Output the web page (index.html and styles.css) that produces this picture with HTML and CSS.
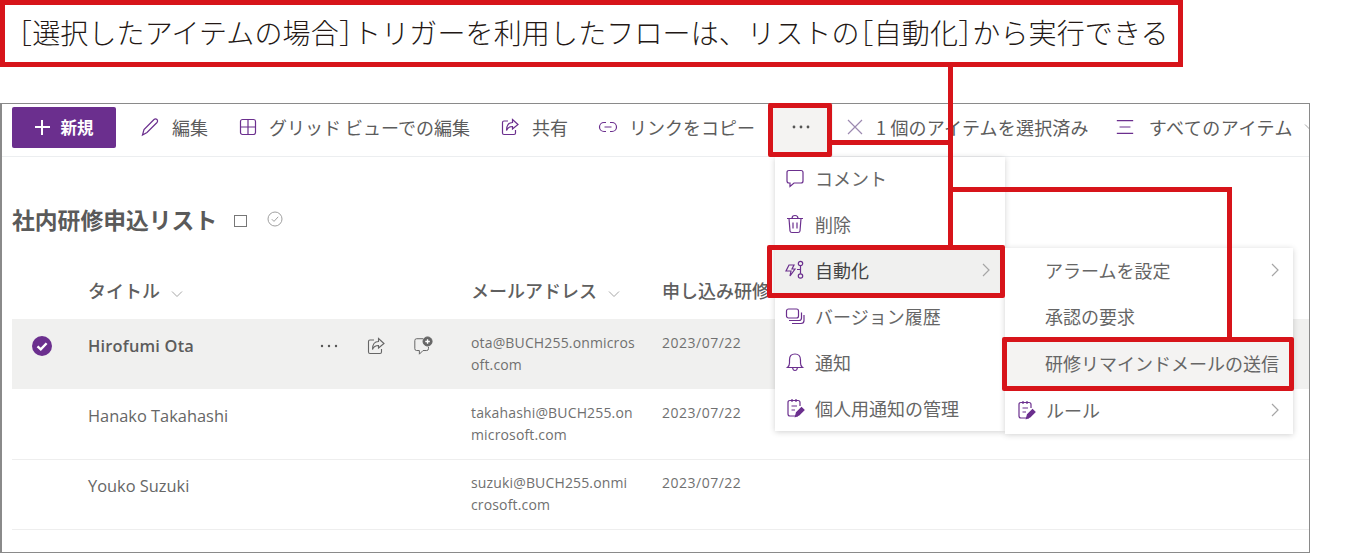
FILE: index.html
```html
<!DOCTYPE html>
<html lang="ja">
<head>
    <meta charset="UTF-8">
    <meta name="viewport" content="width=device-width, initial-scale=1.0">
    <title>社内研修申込リスト</title>
    <link rel="stylesheet" href="styles.css">
</head>
<body>
    <div class="page">
        <div class="caption"><span class="half">［</span>選択したアイテムの場合<span class="half">］</span>トリガーを利用したフローは、リストの<span class="half">［</span>自動化<span class="half">］</span>から実行できる</div>

        <section class="frame">
            <!-- ツールバー -->
            <div class="toolbar">
                <button class="btn-new"><span class="plus"></span>新規</button>
                <span class="tool tool-edit">
                    <svg class="ico" viewBox="0 0 20 20"><path d="M2.5 18 L4 12.5 L14 2.5 Q15.5 1.2 17 2.5 Q18.3 4 17 5.5 L7 15.5 Z"/></svg>編集
                </span>
                <span class="tool tool-grid">
                    <svg class="ico" viewBox="0 0 20 20"><rect x="2.5" y="2.5" width="15" height="15" rx="2"/><path d="M2.5 10 H17.5 M10 2.5 V17.5"/></svg>グリッド ビューでの編集
                </span>
                <span class="tool tool-share">
                    <svg class="ico" viewBox="0 0 20 20"><path d="M8 4 H4 Q2.5 4 2.5 5.5 V16 Q2.5 17.5 4 17.5 H14 Q15.5 17.5 15.5 16 V13"/><path d="M12.5 2.5 L18 7.5 L12.5 12 V9.5 Q8 9.5 6.5 13.5 Q6.5 5.5 12.5 5.5 Z"/></svg>共有
                </span>
                <span class="tool tool-link">
                    <svg class="ico" viewBox="0 0 20 20"><path d="M8 5.5 H6 A4.5 4.5 0 0 0 6 14.5 H8 M12 5.5 H14 A4.5 4.5 0 0 1 14 14.5 H12 M6.5 10 H13.5"/></svg>リンクをコピー
                </span>
                <span class="tool-more">
                    <svg class="dots" viewBox="0 0 20 4"><circle cx="3" cy="2" r="1.4"/><circle cx="10" cy="2" r="1.4"/><circle cx="17" cy="2" r="1.4"/></svg>
                </span>
                <span class="tool tool-clear">
                    <svg class="ico ico-light" viewBox="0 0 20 20"><path d="M3 3 L17 17 M17 3 L3 17"/></svg>1 個のアイテムを選択済み
                </span>
                <span class="tool tool-view">
                    <svg class="ico" viewBox="0 0 22 20"><path d="M2 3 H20 M5 10 H17 M2 17 H20"/></svg>すべてのアイテム
                    <svg class="chev-down chev-view" viewBox="0 0 12 8"><path d="M1 1.5 L6 6.5 L11 1.5"/></svg>
                </span>
            </div>

            <!-- リスト -->
            <h1 class="list-title">社内研修申込リスト<span class="square"></span>
                <svg class="title-check" viewBox="0 0 16 16"><circle cx="8" cy="8" r="7"/><path d="M4.8 8.2 L7 10.4 L11.2 5.8"/></svg>
            </h1>

            <div class="list-head">
                <span></span>
                <span>タイトル<svg class="chev-down" viewBox="0 0 12 8"><path d="M1 1.5 L6 6.5 L11 1.5"/></svg></span>
                <span>メールアドレス<svg class="chev-down" viewBox="0 0 12 8"><path d="M1 1.5 L6 6.5 L11 1.5"/></svg></span>
                <span>申し込み研修</span>
            </div>

            <div class="row row-selected">
                <span class="cell-check">
                    <svg viewBox="0 0 20 20"><circle class="fill" cx="10" cy="10" r="10"/><path class="tick" d="M5.5 10.3 L8.8 13.4 L14.6 7.2"/></svg>
                </span>
                <div class="cell-title">
                    Hirofumi Ota
                    <div class="row-actions">
                        <svg class="dots" viewBox="0 0 20 4"><circle cx="3" cy="2" r="1.2"/><circle cx="10" cy="2" r="1.2"/><circle cx="17" cy="2" r="1.2"/></svg>
                        <svg class="act" viewBox="0 0 20 20"><path d="M8 4 H4 Q2.5 4 2.5 5.5 V16 Q2.5 17.5 4 17.5 H14 Q15.5 17.5 15.5 16 V13"/><path d="M12.5 2.5 L18 7.5 L12.5 12 V9.5 Q8 9.5 6.5 13.5 Q6.5 5.5 12.5 5.5 Z"/></svg>
                        <svg class="act" viewBox="0 0 22 22"><path d="M11 3 H4 Q2 3 2 5 V14 Q2 16 4 16 H7 V20 L11 16 H15 Q17 16 17 14 V12"/><circle class="badge" cx="16" cy="6" r="5"/><path class="badge-plus" d="M16 3.5 V8.5 M13.5 6 H18.5"/></svg>
                    </div>
                </div>
                <div class="cell-mail">ota@BUCH255.onmicros<br>oft.com</div>
                <div class="cell-date">2023/07/22</div>
            </div>
            <div class="row">
                <span class="cell-check"></span>
                <div class="cell-title">Hanako Takahashi</div>
                <div class="cell-mail">takahashi@BUCH255.on<br>microsoft.com</div>
                <div class="cell-date">2023/07/22</div>
            </div>
            <div class="row">
                <span class="cell-check"></span>
                <div class="cell-title">Youko Suzuki</div>
                <div class="cell-mail">suzuki@BUCH255.onmi<br>crosoft.com</div>
                <div class="cell-date">2023/07/22</div>
            </div>
        </section>

        <!-- コンテキストメニュー -->
        <ul class="menu menu-main">
            <li class="menu-item">
                <svg class="ico" viewBox="0 0 20 20"><path d="M4 2.5 H16 Q18 2.5 18 4.5 V13 Q18 15 16 15 H9 L5 18.5 V15 H4 Q2 15 2 13 V4.5 Q2 2.5 4 2.5 Z"/></svg>コメント
            </li>
            <li class="menu-item">
                <svg class="ico" viewBox="0 0 20 20"><path d="M2 4.5 H18 M7 4.5 Q7 1.5 10 1.5 Q13 1.5 13 4.5 M4 4.5 L5 17 Q5.2 18.5 7 18.5 H13 Q14.8 18.5 15 17 L16 4.5 M8 8.5 V14.5 M12 8.5 V14.5"/></svg>削除
            </li>
            <li class="menu-item menu-item-on">
                <svg class="ico" viewBox="0 0 20 20"><path d="M5 6 H10 L8 10 H11 L6 17 L7 12 H2 Z" transform="translate(-1 -1)"/><circle cx="15.5" cy="3.5" r="2.2"/><circle cx="15.5" cy="16" r="2.2"/><path d="M15.5 5.7 V13.8 M15.5 9.5 H12"/></svg>自動化
                <svg class="chev-right" viewBox="0 0 8 14"><path d="M1 1 L7 7 L1 13"/></svg>
            </li>
            <li class="menu-item">
                <svg class="ico" viewBox="0 0 20 20"><rect x="1.5" y="3" width="12" height="9" rx="2"/><path d="M4 14.5 H14 Q16.5 14.5 16.5 12 V6.5 M7 17.5 H16 Q19 17.5 19 14.5 V9"/></svg>バージョン履歴
            </li>
            <li class="menu-item">
                <svg class="ico" viewBox="0 0 20 20"><path d="M2.5 15.5 Q4.5 14 4.5 11 V8 Q4.5 2 10 2 Q15.5 2 15.5 8 V11 Q15.5 14 17.5 15.5 Z M7.5 15.5 Q8 18.5 10 18.5 Q12 18.5 12.5 15.5"/></svg>通知
            </li>
            <li class="menu-item">
                <svg class="ico" viewBox="0 0 20 20"><use href="#rule-icon"/></svg>個人用通知の管理
            </li>
        </ul>

        <ul class="menu menu-sub">
            <li class="menu-item">アラームを設定
                <svg class="chev-right" viewBox="0 0 8 14"><path d="M1 1 L7 7 L1 13"/></svg>
            </li>
            <li class="menu-item menu-item-approve">承認の要求</li>
            <li class="menu-item menu-item-send">研修リマインドメールの送信</li>
            <li class="menu-item menu-item-rule">
                <svg class="ico" viewBox="0 0 20 20">
                    <g id="rule-icon">
                        <path d="M13 18 H5 Q3 18 3 16 V4.5 Q3 2.5 5 2.5 H13 Q15 2.5 15 4.5 V8 M7 1 V4 M11 1 V4 M6.5 8 H12 M6.5 12 H10"/>
                        <path class="solid" d="M10.5 18.5 L11.5 14.5 L16.5 9.5 L19 12 L14 17 Z"/>
                    </g>
                </svg>ルール
                <svg class="chev-right" viewBox="0 0 8 14"><path d="M1 1 L7 7 L1 13"/></svg>
            </li>
        </ul>

        <!-- 赤い注釈 -->
        <div class="mark mark-more"></div>
        <div class="mark mark-auto"></div>
        <div class="mark mark-send"></div>
        <div class="line line-down"></div>
        <div class="line line-more"></div>
        <div class="line line-over"></div>
        <div class="line line-right"></div>
    </div>
</body>
</html>
```

FILE: styles.css
```css
/* ページ全体 */
html, body {
    margin: 0;
    padding: 0;
    background-color: white;
}

body {
    font-family: "Noto Sans CJK JP", "Noto Sans", sans-serif;
    color: #5c5c5c;
}

.page {
    position: relative;
    width: 1349px;
    height: 553px;
    overflow: hidden;
}

/* 上部の説明文 */
.caption {
    box-sizing: border-box;
    width: 1183px;
    height: 67px;
    border: 5px solid #d7141a;
    padding-left: 13px;
    font-size: 28px;
    font-weight: 300;
    letter-spacing: 0.14px;
    line-height: 54px;
    color: #231815;
    white-space: nowrap;
}

.half {
    font-feature-settings: "halt";
}

/* スクリーンショットの枠 */
.frame {
    box-sizing: border-box;
    width: 1310px;
    height: 450px;
    margin: 36px 0 0 0;
    border: 1px solid #8a8a8a;
    border-left-width: 2px;
    overflow: hidden;
}

/* ツールバー */
.toolbar {
    display: flex;
    align-items: center;
    box-sizing: content-box;
    height: 46px;
    padding: 0 0 6px 10px;
    border-bottom: 1px solid #eceef0;
    white-space: nowrap;
    font-size: 18px;
}

.toolbar > * {
    flex: none;
}

.btn-new {
    display: flex;
    align-items: center;
    justify-content: center;
    gap: 11px;
    width: 104px;
    height: 41px;
    padding: 0;
    border: none;
    border-radius: 2px;
    background-color: #6b2f8e;
    color: white;
    font-family: inherit;
    font-size: 16.5px;
    font-weight: 700;
}

.plus {
    position: relative;
    width: 15px;
    height: 15px;
    background:
        linear-gradient(white, white) center / 100% 2px no-repeat,
        linear-gradient(white, white) center / 2px 100% no-repeat;
}

.tool {
    display: flex;
    align-items: center;
    gap: 10px;
}

.tool-edit { margin-left: 24px; gap: 12px; }
.tool-grid { margin-left: 30px; gap: 11px; }
.tool-share { margin-left: 30px; gap: 12px; }
.tool-link { margin-left: 30px; gap: 11px; }
.tool-clear { margin-left: 5px; gap: 11px; letter-spacing: 0.2px; }
.tool-view { margin-left: 26px; gap: 14px; letter-spacing: 0.5px; }

.tool-more {
    display: flex;
    align-items: center;
    justify-content: center;
    align-self: flex-start;
    box-sizing: border-box;
    width: 64px;
    height: 52px;
    padding-bottom: 6px;
    margin: 0 7px 0 14px;
    background-color: #f4f3f2;
}

/* アイコン共通 */
svg {
    fill: none;
    stroke: #6b2f8e;
    stroke-width: 1.2;
    flex: none;
}

.ico {
    width: 20px;
    height: 20px;
}

.ico-light {
    stroke: #9c8ab0;
}

.dots {
    width: 20px;
    height: 4px;
    fill: #555;
    stroke: none;
}

.chev-down {
    width: 12px;
    height: 8px;
    stroke: #a6a6a6;
    stroke-width: 1;
}

.chev-view {
    margin-left: -3px;
}

.chev-right {
    width: 8px;
    height: 14px;
    margin-left: auto;
    stroke: #a6a6a6;
    stroke-width: 1.2;
}

.solid {
    fill: #6b2f8e;
}

/* リスト見出し */
.list-title {
    display: flex;
    align-items: center;
    height: 32px;
    margin: 46px 0 0 10px;
    font-size: 22.8px;
    font-weight: 700;
    color: #5a5a5a;
}

.square {
    box-sizing: border-box;
    width: 13px;
    height: 12px;
    margin: 4px 20px 0 17px;
    border: 1px solid #777;
}

.title-check {
    width: 16px;
    height: 16px;
    stroke: #a0a0a0;
    stroke-width: 1;
}

.list-head,
.row {
    display: grid;
    grid-template-columns: 76px 383px 191px 1fr;
    margin-left: 10px;
}

.list-head {
    height: 28px;
    margin-top: 41px;
    margin-bottom: 15px;
    font-size: 18px;
    font-weight: 500;
    line-height: 28px;
    color: #5f5f5f;
}

.list-head .chev-down {
    margin-left: 11px;
}

/* 行 */
.row {
    box-sizing: border-box;
    height: 70px;
    border-bottom: 1px solid #eeeeee;
    font-family: "Open Sans", "Noto Sans", sans-serif;
    font-size: 14px;
    line-height: 21.5px;
}

.row-selected {
    height: 71px;
    background-color: #f0f0ef;
    border-bottom-color: white;
}

.cell-check {
    padding: 17px 0 0 20px;
}

.cell-check svg {
    display: block;
    width: 20px;
    height: 20px;
    stroke: none;
}

.cell-check .fill {
    fill: #6b2f8e;
}

.cell-check .tick {
    stroke: white;
    stroke-width: 2.4;
}

.cell-title {
    display: flex;
    align-items: flex-start;
    padding: 15px 38px 0 0;
    font-size: 16.4px;
    color: #666;
}

.row-selected .cell-title {
    padding-top: 16px;
    font-weight: 600;
    letter-spacing: 0.2px;
    color: #5c5c5c;
}

.row-actions {
    display: flex;
    align-items: center;
    gap: 27px;
    margin-left: auto;
    height: 21px;
}

.row-actions .act {
    width: 20px;
    height: 20px;
    stroke: #666;
    stroke-width: 1.1;
}

.badge {
    fill: #666;
}

.badge-plus {
    stroke: white;
    stroke-width: 1.5;
}

.cell-mail {
    padding-top: 12px;
    letter-spacing: 0.15px;
    color: #707070;
}

.cell-date {
    padding-top: 12px;
    letter-spacing: 0.5px;
    color: #707070;
}

.row-selected .cell-mail,
.row-selected .cell-date {
    padding-top: 13px;
}

/* メニュー */
.menu {
    position: absolute;
    box-sizing: border-box;
    margin: 0;
    padding: 0;
    list-style: none;
    background-color: white;
    box-shadow: 0 1px 6px rgba(0, 0, 0, 0.18);
    font-size: 18px;
    color: #666;
}

.menu-main {
    left: 775px;
    top: 157px;
    width: 230px;
}

.menu-sub {
    left: 1005px;
    top: 248px;
    width: 288px;
}

.menu-item {
    display: flex;
    align-items: center;
    gap: 10px;
    box-sizing: border-box;
    height: 46px;
    padding: 0 15px 0 10px;
}

.menu-main .menu-item:first-child {
    height: 44px;
    padding-bottom: 2px;
}

.menu-sub .menu-item {
    padding: 0 14px 2px 40px;
}

.menu-item-on {
    background-color: #f0f0ef;
    color: #444;
}

.menu-sub .menu-item-approve {
    padding-bottom: 3px;
}

.menu-sub .menu-item-send {
    height: 48px;
    background-color: #f4f3f2;
}

.menu-sub .menu-item-rule {
    padding-left: 11px;
    gap: 10px;
}

/* 赤い注釈 */
.mark {
    position: absolute;
    box-sizing: border-box;
    border: 5px solid #d7141a;
    border-radius: 2px;
}

.mark-more { left: 768px; top: 103px; width: 64px; height: 54px; }
.mark-auto { left: 767px; top: 245px; width: 238px; height: 53px; }
.mark-send { left: 1002px; top: 337px; width: 292px; height: 54px; }

.line {
    position: absolute;
    background-color: #d7141a;
}

.line-down { left: 948px; top: 67px; width: 5px; height: 180px; }
.line-more { left: 830px; top: 140px; width: 120px; height: 5px; }
.line-over { left: 950px; top: 187px; width: 282px; height: 5px; }
.line-right { left: 1227px; top: 187px; width: 5px; height: 152px; }
```
